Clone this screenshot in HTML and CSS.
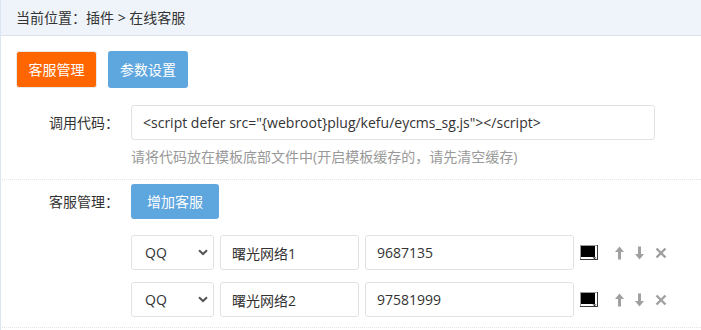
FILE: index.html
```html
<!DOCTYPE html>
<html lang="zh-CN">
<head>
    <meta charset="UTF-8">
    <title>在线客服</title>
    <link rel="stylesheet" href="styles.css">
</head>
<body>
    <div class="crumb">当前位置：插件 &gt; 在线客服</div>

    <div class="page">
        <div class="tabs">
            <a class="btn btn-orange">客服管理</a>
            <a class="btn btn-blue">参数设置</a>
        </div>

        <div class="form-row">
            <label class="form-label">调用代码：</label>
            <div class="field">
                <input class="text-input code-input" type="text" value='<script defer src="{webroot}plug/kefu/eycms_sg.js"></script>'>
                <p class="hint">请将代码放在模板底部文件中(开启模板缓存的，请先清空缓存)</p>
            </div>
        </div>

        <div class="form-row kefu-block">
            <label class="form-label">客服管理：</label>
            <div class="field">
                <a class="btn btn-blue btn-add">增加客服</a>

                <div class="kefu-row">
                    <div class="select-wrap">
                        <select class="text-input kefu-type"><option>QQ</option></select>
                        <svg class="chevron" width="10" height="7" viewBox="0 0 10 7"><path d="M1 1.2 L5 5 L9 1.2" fill="none" stroke="#555" stroke-width="2"/></svg>
                    </div>
                    <input class="text-input kefu-name" type="text" value="曙光网络1">
                    <input class="text-input kefu-num" type="text" value="9687135">
                    <svg class="color-pick" width="18" height="15" viewBox="0 0 18 15">
                        <rect x="0" y="0" width="18" height="15" fill="#fff"/>
                        <rect x="1" y="1" width="14" height="11" fill="#000"/>
                        <path d="M0 0.5 H17 M0.5 0 V15" stroke="#9a9a9a" stroke-width="1"/>
                        <path d="M0 14.5 H18 M17.5 0 V15" stroke="#3a3a3a" stroke-width="1"/>
                        <path d="M12.5 12.5 H16.5 L14.5 14 Z" fill="#000"/>
                    </svg>
                    <span class="ops">
                        <svg width="9" height="14" viewBox="0 0 9 14"><path d="M4.5 0.5 L9 6 H6 V13.5 H3 V6 H0 Z" fill="#a0a0a0"/></svg>
                        <svg width="9" height="14" viewBox="0 0 9 14"><path d="M4.5 13.5 L9 8 H6 V0.5 H3 V8 H0 Z" fill="#a0a0a0"/></svg>
                        <svg width="12" height="12" viewBox="0 0 12 12"><path d="M1.5 1.5 L10.5 10.5 M10.5 1.5 L1.5 10.5" stroke="#a0a0a0" stroke-width="2.4"/></svg>
                    </span>
                </div>

                <div class="kefu-row">
                    <div class="select-wrap">
                        <select class="text-input kefu-type"><option>QQ</option></select>
                        <svg class="chevron" width="10" height="7" viewBox="0 0 10 7"><path d="M1 1.2 L5 5 L9 1.2" fill="none" stroke="#555" stroke-width="2"/></svg>
                    </div>
                    <input class="text-input kefu-name" type="text" value="曙光网络2">
                    <input class="text-input kefu-num" type="text" value="97581999">
                    <svg class="color-pick" width="18" height="15" viewBox="0 0 18 15">
                        <rect x="0" y="0" width="18" height="15" fill="#fff"/>
                        <rect x="1" y="1" width="14" height="11" fill="#000"/>
                        <path d="M0 0.5 H17 M0.5 0 V15" stroke="#9a9a9a" stroke-width="1"/>
                        <path d="M0 14.5 H18 M17.5 0 V15" stroke="#3a3a3a" stroke-width="1"/>
                        <path d="M12.5 12.5 H16.5 L14.5 14 Z" fill="#000"/>
                    </svg>
                    <span class="ops">
                        <svg width="9" height="14" viewBox="0 0 9 14"><path d="M4.5 0.5 L9 6 H6 V13.5 H3 V6 H0 Z" fill="#a0a0a0"/></svg>
                        <svg width="9" height="14" viewBox="0 0 9 14"><path d="M4.5 13.5 L9 8 H6 V0.5 H3 V8 H0 Z" fill="#a0a0a0"/></svg>
                        <svg width="12" height="12" viewBox="0 0 12 12"><path d="M1.5 1.5 L10.5 10.5 M10.5 1.5 L1.5 10.5" stroke="#a0a0a0" stroke-width="2.4"/></svg>
                    </span>
                </div>
            </div>
        </div>
    </div>
</body>
</html>
```

FILE: styles.css
```css
body {
    margin: 0;
    font-family: "Open Sans", "Noto Sans CJK SC", sans-serif;
    font-size: 14px;
    color: #333;
    background: #fff;
    border-left: 1px solid #dbe6f2;
    min-height: 330px;
    box-sizing: border-box;
}

.crumb {
    height: 35px;
    line-height: 35px;
    padding-left: 15px;
    font-size: 14px;
    color: #333;
    background-color: #eff4fa;
    border-bottom: 1px solid #dae3ed;
}

.page {
    padding: 15px 0 0 15px;
}

.tabs {
    display: flex;
    gap: 11px;
}

.btn {
    display: inline-block;
    height: 37px;
    line-height: 37px;
    padding: 0;
    color: #fff;
    font-size: 14px;
    border-radius: 3px;
    text-align: center;
    box-sizing: border-box;
    white-space: nowrap;
}

.btn-orange {
    width: 81px;
    background-color: #ff6600;
    border: 1px solid #e9e9e9;
    line-height: 35px;
}

.btn-blue {
    width: 80px;
    background-color: #5ea6de;
}

.form-row {
    display: flex;
    margin-top: 17px;
}

.form-label {
    width: 103px;
    margin-right: 12px;
    text-align: right;
    line-height: 35px;
    font-size: 14px;
    color: #333;
}

.field {
    display: flex;
    flex-direction: column;
    align-items: flex-start;
}

.text-input {
    height: 35px;
    border: 1px solid #e2e2e2;
    border-radius: 3px;
    box-sizing: border-box;
    padding: 0 11px;
    font-family: "Open Sans", "Noto Sans CJK SC", sans-serif;
    font-size: 14px;
    color: #333;
    background: #fff;
    outline: none;
}

.code-input {
    width: 524px;
}

.hint {
    margin: 7px 0 0;
    line-height: 20px;
    font-size: 14px;
    color: #999;
}

.kefu-block {
    margin-top: 12px;
    margin-left: -16px;
    padding: 4px 0 10px 16px;
    border-top: 1px dotted #e4e4e4;
    border-bottom: 1px dotted #e4e4e4;
}

.btn-add {
    width: 88px;
    height: 35px;
    line-height: 35px;
}

.kefu-row {
    display: flex;
    align-items: center;
    gap: 6px;
    margin-top: 16px;
}

.kefu-row + .kefu-row {
    margin-top: 12px;
}

.select-wrap {
    position: relative;
}

.kefu-type {
    width: 83px;
    padding-left: 13px;
    appearance: none;
    -webkit-appearance: none;
}

.chevron {
    position: absolute;
    right: 6px;
    top: 14px;
}

.kefu-name {
    width: 139px;
}

.kefu-num {
    width: 209px;
}

.color-pick {
    margin-left: 0;
}

.ops {
    display: flex;
    align-items: center;
    gap: 11px;
    margin-left: 11px;
}
```
